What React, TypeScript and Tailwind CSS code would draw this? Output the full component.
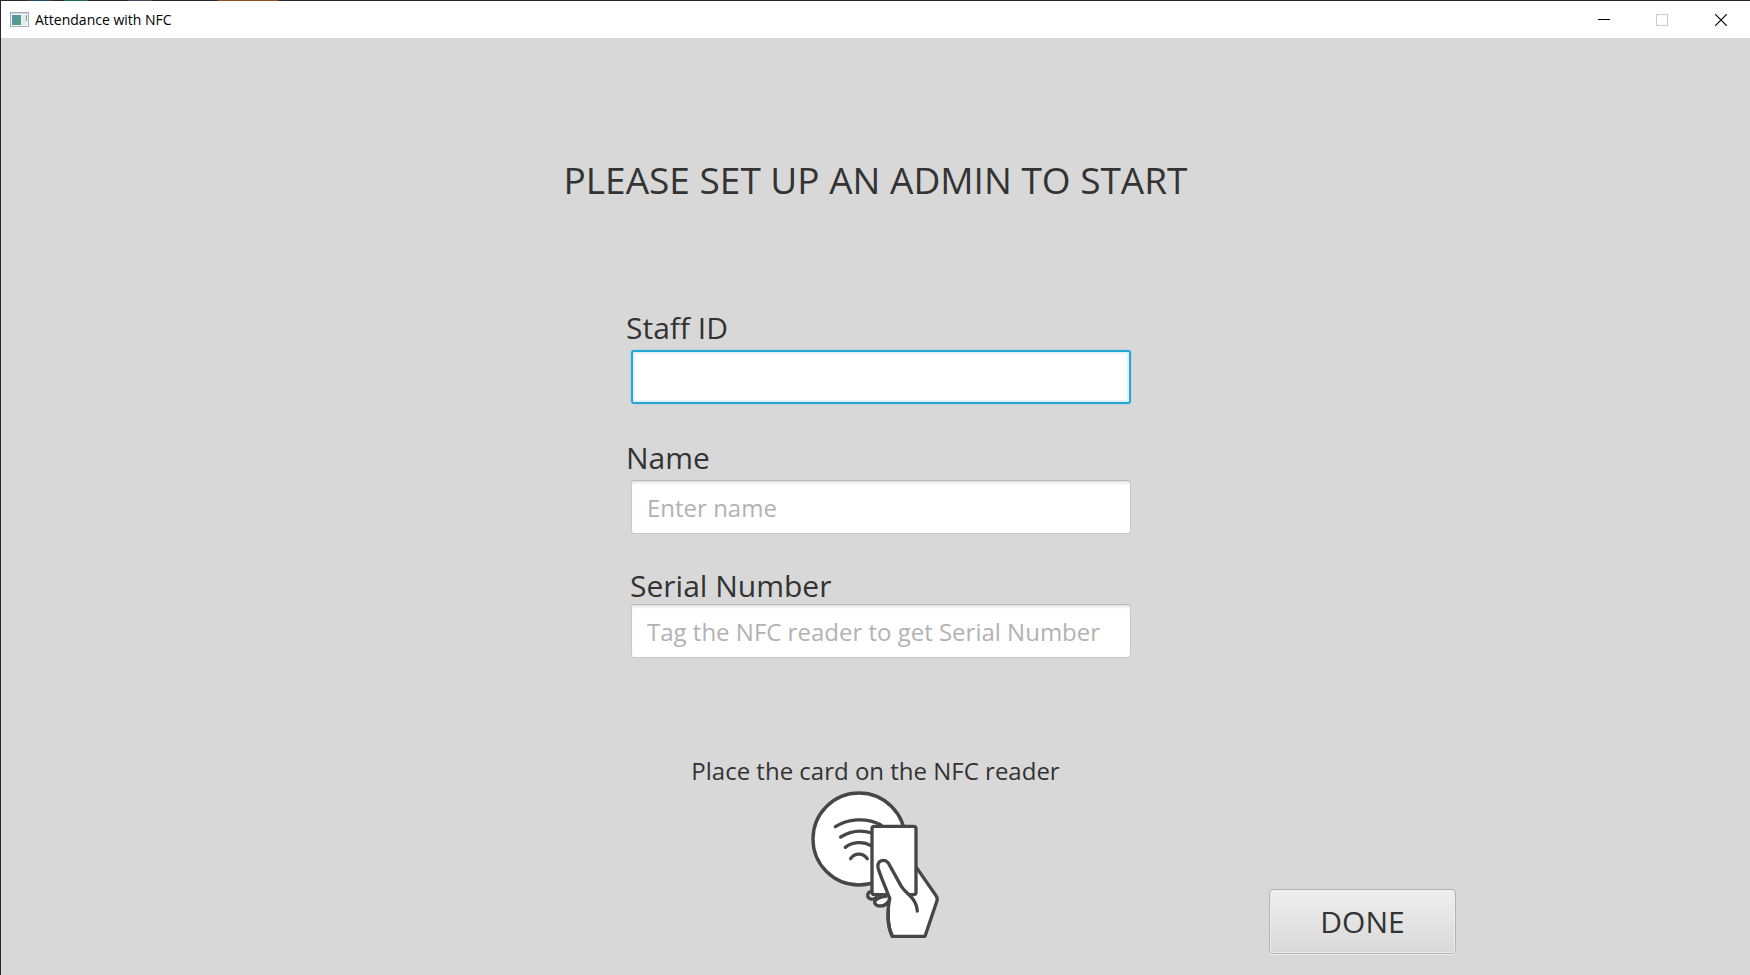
import { useState } from "react";

function AppIcon() {
  return (
    <svg width="19" height="16" viewBox="0 0 19 16" aria-hidden="true">
      <defs>
        <linearGradient id="appIconPane" x1="0" y1="0" x2="1" y2="1">
          <stop offset="0" stopColor="#5b8fb8" />
          <stop offset="1" stopColor="#4fa377" />
        </linearGradient>
      </defs>
      <rect x="0.5" y="0.5" width="18" height="14" fill="#f4f5f6" stroke="#a9adb3" />
      <rect x="1" y="1" width="17" height="1" fill="#d5d8dc" />
      <rect x="2" y="3" width="9" height="10" fill="url(#appIconPane)" />
      <rect x="12" y="3" width="4" height="10" fill="#e6eaee" />
      <rect x="16" y="3" width="1" height="6" fill="#63a98b" />
    </svg>
  );
}

function DesktopEdge() {
  return (
    <div className="flex h-px bg-[#2b262b]" aria-hidden="true">
      <span className="ml-[27px] w-6 bg-[#23486b]" />
      <span className="ml-3 w-6 bg-[#1f6b55]" />
      <span className="ml-10 w-6 bg-[#4a4560]" />
      <span className="ml-[66px] w-[60px] bg-[#8a5228]" />
    </div>
  );
}

function TitleBar() {
  return (
    <header className="flex h-[37px] items-center bg-white pl-[9px]">
      <AppIcon />
      <span className="ml-[6px] flex-1 text-[14px] leading-5 text-black">Attendance with NFC</span>
      <div className="flex h-full">
        <button type="button" aria-label="Minimize" className="flex w-[58px] items-center justify-center">
          <svg width="12" height="12" viewBox="0 0 12 12" shapeRendering="crispEdges">
            <path d="M0 5.5H12" stroke="#000" />
          </svg>
        </button>
        <button type="button" aria-label="Maximize" disabled className="flex w-[58px] items-center justify-center">
          <svg width="12" height="12" viewBox="0 0 12 12" shapeRendering="crispEdges">
            <rect x="0.5" y="0.5" width="11" height="11" fill="none" stroke="#cccccc" />
          </svg>
        </button>
        <button type="button" aria-label="Close" className="ml-px flex w-[58px] items-center justify-center">
          <svg width="12" height="12" viewBox="0 0 12 12">
            <path d="M0.3 0.3L11.7 11.7M11.7 0.3L0.3 11.7" stroke="#000" strokeWidth="1.2" />
          </svg>
        </button>
      </div>
    </header>
  );
}

function CardReaderIcon() {
  return (
    <svg
      width="128"
      height="148"
      viewBox="66 31 384 444"
      fill="none"
      stroke="#464646"
      strokeWidth="10"
      strokeLinecap="round"
      strokeLinejoin="round"
      aria-hidden="true"
    >
      <circle cx="210" cy="175" r="138" fill="#fff" />
      <path d="M139 138C174 116 229 108 276 133" />
      <path d="M155 169C182 152 216 147 248 157" />
      <path d="M169 200C190 183 224 181 246 195" />
      <path d="M185 234C197 216 222 216 235 234" />
      <path d="M246 333C234 335 233 350 243 354C249 356 257 355 262 350" fill="#fff" />
      <path d="M290 347C278 347 255 355 257 366C261 379 287 380 297 364" fill="#fff" />
      <path
        d="M382 260L441 345Q447 353 443 363L408 467H310C294 434 296 400 302 354L340 300Z"
        fill="#fff"
      />
      <rect x="249" y="137" width="132" height="205" rx="7" fill="#fff" />
      <path
        d="M302 354L266 262C263 240 286 232 298 247L340 322C350 334 358 341 366 349L340 400L303 390Z"
        fill="#fff"
        stroke="none"
      />
      <path d="M302 354C293 327 272 282 267 260C264 240 286 232 298 247L337 317C348 334 361 342 370 353C380 366 384 378 385 391" />
      <path d="M302 352C294 395 294 434 310 467" />
    </svg>
  );
}

const inputClass =
  "ml-3 block h-[54px] w-[500px] rounded-[3px] border border-[#c8c8c8] border-t-[#b9b9b9] bg-white px-[15px] text-[24px] leading-8 text-[#333333] shadow-[inset_0_3px_3px_-1px_#e4e4e4] outline-none placeholder:text-[#b2b2b2] placeholder:opacity-100 focus:border-2 focus:border-[#22a7d6] focus:px-[14px] focus:shadow-[inset_0_0_0_2px_#e2f2f9,0_0_2px_#8fc6dc]";

export default function App() {
  const [staffId, setStaffId] = useState("");
  const [name, setName] = useState("");
  const [serial, setSerial] = useState("");

  return (
    <div className="flex min-h-screen flex-col border-l border-[#2b262b] bg-[#d8d8d8] font-['Open_Sans','Noto_Sans',sans-serif] text-[#333333]">
      <DesktopEdge />
      <TitleBar />
      <main className="flex-1">
        <form onSubmit={(e) => e.preventDefault()} className="flex flex-col items-center">
          <h1 className="mt-[116px] text-[37px] leading-[52px]">PLEASE SET UP AN ADMIN TO START</h1>

          <div className="mt-[102px] w-[513px]">
            <label htmlFor="staff-id" className="mb-[2px] block pl-[7px] text-[30px] leading-10">
              Staff ID
            </label>
            <input
              id="staff-id"
              autoFocus
              className={`${inputClass} caret-transparent`}
              value={staffId}
              onChange={(e) => setStaffId(e.target.value)}
            />
          </div>
          <div className="mt-[34px] w-[513px]">
            <label htmlFor="name" className="mb-[2px] block pl-[7px] text-[30px] leading-10">
              Name
            </label>
            <input
              id="name"
              placeholder="Enter name"
              className={inputClass}
              value={name}
              onChange={(e) => setName(e.target.value)}
            />
          </div>
          <div className="mt-[34px] w-[513px]">
            <label htmlFor="serial" className="block pl-[11px] text-[30px] leading-9">
              Serial Number
            </label>
            <input
              id="serial"
              placeholder="Tag the NFC reader to get Serial Number"
              className={inputClass}
              value={serial}
              onChange={(e) => setSerial(e.target.value)}
            />
          </div>

          <div className="mt-[97px] grid w-full grid-cols-[1fr_auto_1fr] items-end">
            <div className="col-start-2 flex flex-col items-center pb-[15px]">
              <p className="mb-[4px] text-[24px] leading-8">Place the card on the NFC reader</p>
              <CardReaderIcon />
            </div>
            <div className="flex justify-end pr-[294px]">
              <button
                type="submit"
                className="h-[65px] w-[187px] rounded-[4px] border border-[#b4b4b4] bg-linear-to-b from-[#efefef] to-[#d9d9d9] text-[30px] leading-10 shadow-[inset_0_0_0_1px_#ececec,0_1px_0_#eeeeee]"
              >
                DONE
              </button>
            </div>
          </div>
        </form>
      </main>
    </div>
  );
}
